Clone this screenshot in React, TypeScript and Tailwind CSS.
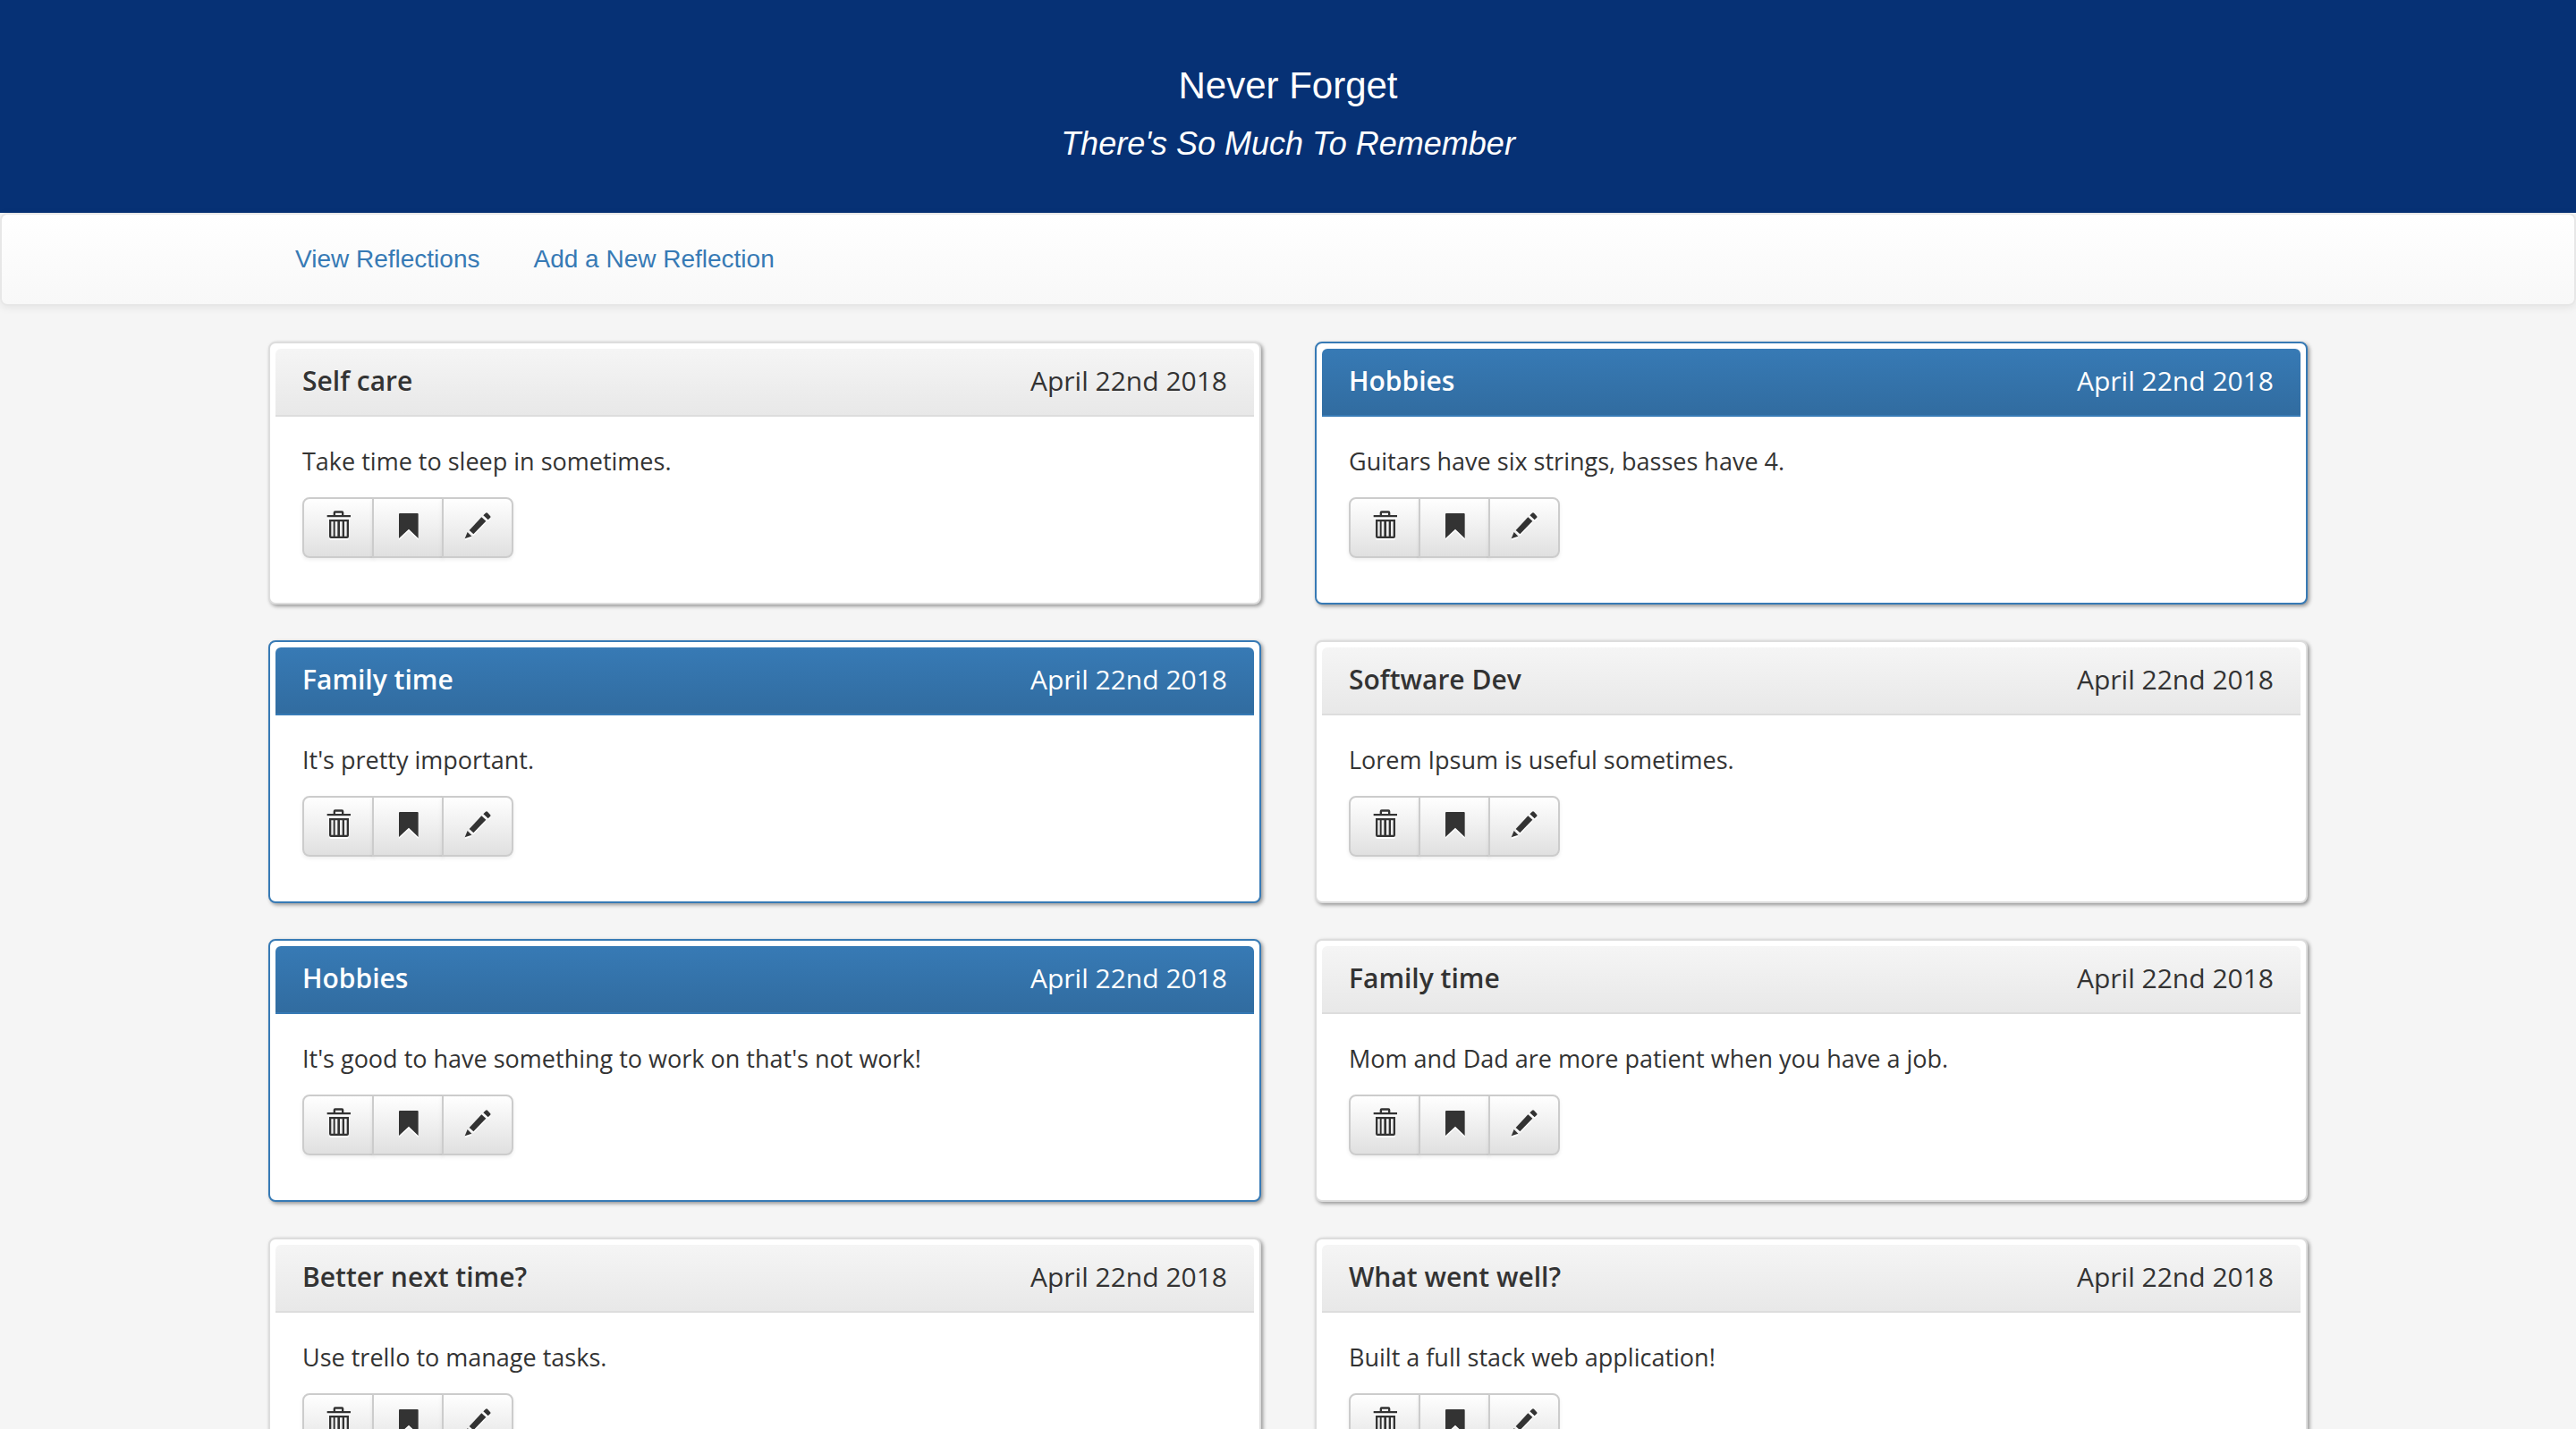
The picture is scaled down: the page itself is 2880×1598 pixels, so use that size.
import type { ReactNode } from "react";

type Reflection = {
  title: string;
  date: string;
  text: string;
  marked: boolean;
};

const reflections: Reflection[] = [
  { title: "Self care", date: "April 22nd 2018", text: "Take time to sleep in sometimes.", marked: false },
  { title: "Hobbies", date: "April 22nd 2018", text: "Guitars have six strings, basses have 4.", marked: true },
  { title: "Family time", date: "April 22nd 2018", text: "It's pretty important.", marked: true },
  { title: "Software Dev", date: "April 22nd 2018", text: "Lorem Ipsum is useful sometimes.", marked: false },
  { title: "Hobbies", date: "April 22nd 2018", text: "It's good to have something to work on that's not work!", marked: true },
  { title: "Family time", date: "April 22nd 2018", text: "Mom and Dad are more patient when you have a job.", marked: false },
  { title: "Better next time?", date: "April 22nd 2018", text: "Use trello to manage tasks.", marked: false },
  { title: "What went well?", date: "April 22nd 2018", text: "Built a full stack web application!", marked: false },
];

function Icon({ children }: { children: ReactNode }) {
  return (
    <svg viewBox="0 0 84 96" className="h-8 w-7 overflow-visible fill-[#333] drop-shadow-[0_2px_0_#fff]" aria-hidden="true">
      {children}
    </svg>
  );
}

function TrashIcon() {
  return (
    <Icon>
      <path d="M26 18V10Q26 4 32 4H55Q61 4 61 10V18H84V25H5V18ZM33 18H54V11H33Z" fillRule="evenodd" />
      <path
        d="M12 33H78V90Q78 96 72 96H18Q12 96 12 90ZM19 40V89H26V40ZM32 40V89H40V40ZM48 40V89H56V40ZM63 40V89H71V40Z"
        fillRule="evenodd"
      />
    </Icon>
  );
}

function BookmarkIcon() {
  return (
    <Icon>
      <path d="M12 15Q12 12 15 12H74Q77 12 77 15V96L45 65L12 96Z" />
    </Icon>
  );
}

function PencilIcon() {
  return (
    <Icon>
      <path d="M-1 97L8 75L22 89Z" />
      <path d="M14 69L55 25L70 38L28 82Z" />
      <path d="M61 19L69 11Q72 8 75 11L84 21Q87 24 84 27L77 34Z" />
    </Icon>
  );
}

function ActionButton({ label, children }: { label: string; children: ReactNode }) {
  return (
    <button
      type="button"
      aria-label={label}
      className="-ml-0.5 flex cursor-pointer items-start border-2 border-[#ccc] bg-linear-to-b from-white to-[#e0e0e0] px-6 pt-3 pb-5 shadow-[0_2px_4px_rgba(0,0,0,0.075)] first:ml-0 first:rounded-l-lg last:rounded-r-lg"
    >
      {children}
    </button>
  );
}

function Card({ title, date, text, marked }: Reflection) {
  return (
    <article
      className={
        "rounded-lg border-2 bg-white p-1.5 shadow-[2px_2px_4px_rgba(0,0,0,0.4)] " +
        (marked ? "border-[#377ab5]" : "border-[#ddd]")
      }
    >
      <header
        className={
          "flex items-center justify-between rounded-t-md border-b-2 px-[30px] pt-[15px] pb-[17px] text-[30px] leading-[42px] " +
          (marked
            ? "border-[#377ab5] bg-linear-to-b from-[#377ab5] to-[#316ca0] text-white"
            : "border-[#ddd] bg-linear-to-b from-[#f5f5f5] to-[#e8e8e8] text-[#333]")
        }
      >
        <h3 className="font-semibold">{title}</h3>
        <time>{date}</time>
      </header>
      <div className="px-[30px] pt-[30px] pb-11 text-[27px] leading-10 text-[#333]">
        <p className="mb-5">{text}</p>
        <div className="flex">
          <ActionButton label="Delete">
            <TrashIcon />
          </ActionButton>
          <ActionButton label="Bookmark">
            <BookmarkIcon />
          </ActionButton>
          <ActionButton label="Edit">
            <PencilIcon />
          </ActionButton>
        </div>
      </div>
    </article>
  );
}

export default function App() {
  return (
    <div className="h-screen overflow-hidden bg-[#f5f5f5] font-['Open_Sans',sans-serif]">
      <header className="bg-[#063175] pt-[66px] pb-14 text-center font-['Liberation_Sans',Arial,sans-serif] text-white">
        <h1 className="text-[42px] leading-[60px]">Never Forget</h1>
        <h2 className="mt-3.5 text-[36px] leading-[42px] italic">There's So Much To Remember</h2>
      </header>
      <nav className="rounded-lg border-2 border-[#e7e7e7] bg-linear-to-b from-white to-[#f8f8f8] shadow-[0_2px_10px_rgba(0,0,0,0.075)]">
        <div className="mx-auto flex max-w-[2280px] gap-[60px] px-[30px] py-[30px] font-['Liberation_Sans',Arial,sans-serif] text-[28px] leading-10 text-[#377ab5]">
          <a href="#view">View Reflections</a>
          <a href="#add">Add a New Reflection</a>
        </div>
      </nav>
      <main className="mx-auto mt-10 grid max-w-[2280px] grid-cols-2 gap-x-[60px] gap-y-10">
        {reflections.map((reflection, index) => (
          <Card key={index} {...reflection} />
        ))}
      </main>
    </div>
  );
}
